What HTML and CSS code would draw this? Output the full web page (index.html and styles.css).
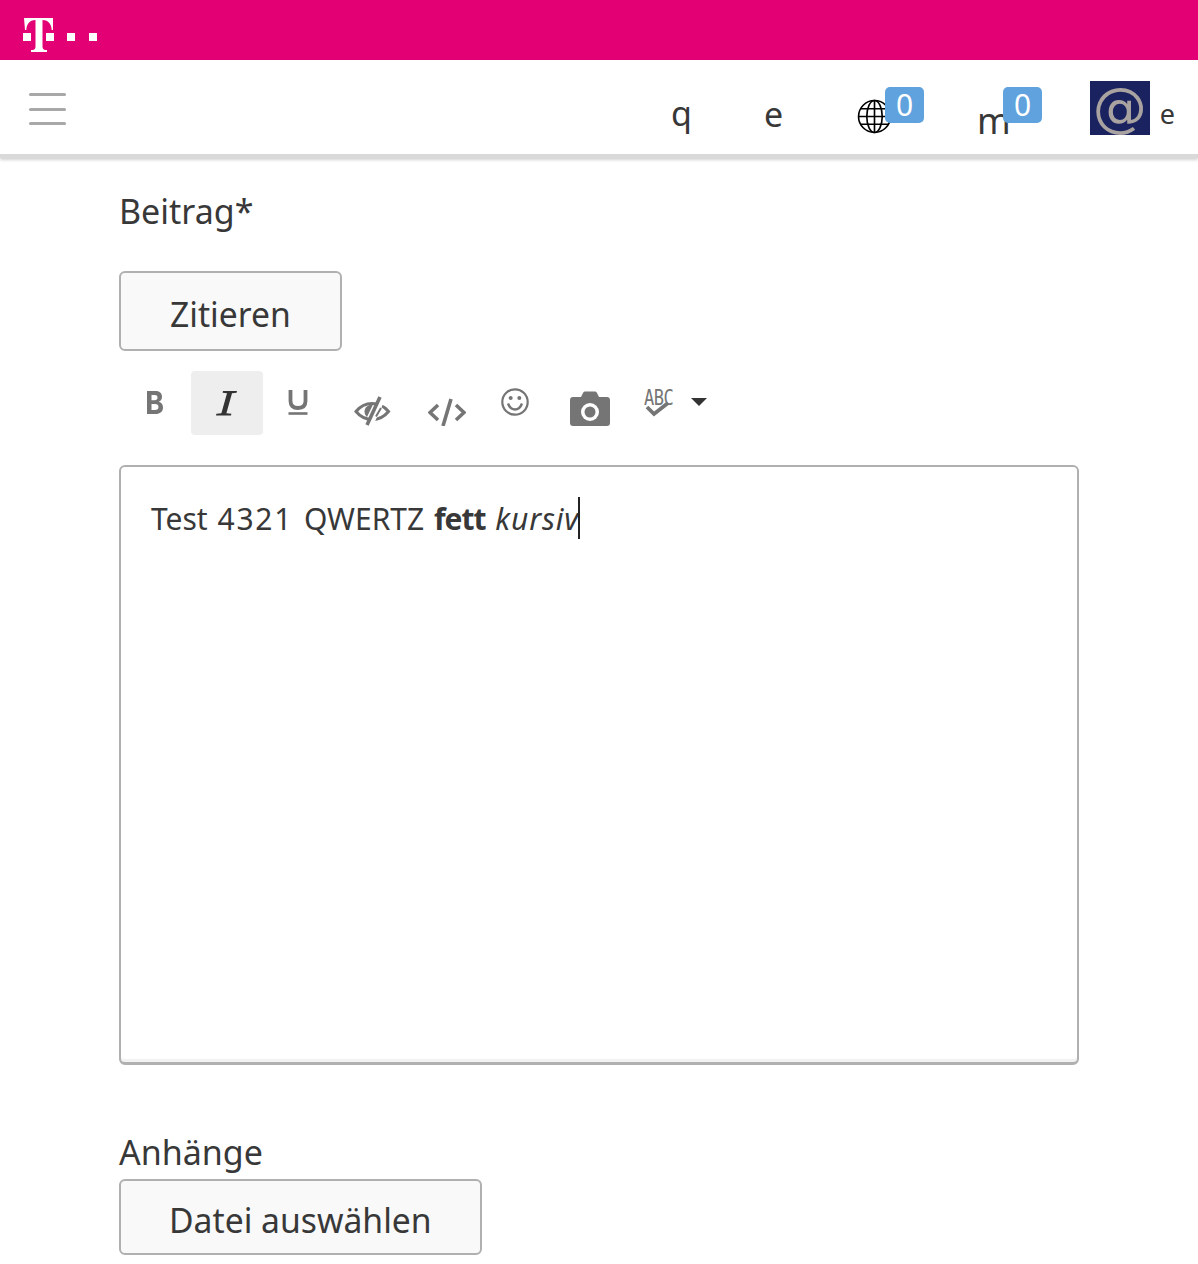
FILE: index.html
```html
<!DOCTYPE html>
<html lang="de">

<head>
    <meta charset="UTF-8" />
    <meta name="viewport" content="width=device-width, initial-scale=1.0" />
    <title>Beitrag</title>
    <link rel="stylesheet" href="styles.css">
</head>

<body>

    <header class="brand-bar">
        <svg class="brand-logo" width="76" height="37" viewBox="0 0 76 37" fill="#fff">
            <path d="M1 1h29v12h-1.300c-.2-5.500-3-9.800-9.200-10v26.500c0 2.500 1 3.300 3 3.500h1.500v2h-16v-2h1.500c2-.2 3-1 3-3.500v-26.500c-6.200.2-9 4.500-9.200 10h-1.300z" />
            <rect x="0" y="16" width="8" height="8" />
            <rect x="23" y="16" width="8" height="8" />
            <rect x="44" y="16" width="8" height="8" />
            <rect x="66" y="16" width="8" height="8" />
        </svg>
    </header>

    <nav class="nav-bar">
        <div class="burger"><span></span><span></span><span></span></div>
        <div class="nav-items">
            <span class="nav-item nav-q">q</span>
            <span class="nav-item nav-e">e</span>
            <span class="nav-item nav-globe">
                <svg width="35" height="35" viewBox="0 0 34 34" fill="none" stroke="#000" stroke-width="1.600">
                    <circle cx="17" cy="17" r="15.500" />
                    <ellipse cx="17" cy="17" rx="7.500" ry="15.500" />
                    <path d="M17 1.500v31M1.500 17h31M3.500 9.500h27M3.500 24.500h27" />
                </svg>
                <span class="badge">0</span>
            </span>
            <span class="nav-item nav-m">m<span class="badge">0</span></span>
            <span class="avatar">@</span>
            <span class="nav-item nav-last">e</span>
        </div>
    </nav>

    <main class="content">
        <label class="field-label post-label">Beitrag*</label>
        <button class="btn quote-btn">Zitieren</button>

        <div class="toolbar">
            <span class="tool tool-b">
                <svg width="18" height="26" viewBox="0 0 18 26" fill="#757575"><path fill-rule="evenodd" d="M1 1h8c4.500 0 7 2 7 5.800 0 2.500-1.200 4.200-3.300 5 2.800.7 4.300 2.700 4.300 5.700 0 4.300-3 6.500-7.500 6.500h-8.500zM5.500 5v5.300h3c2 0 3-.9 3-2.700s-1-2.600-3-2.600zM5.500 14v6h3.500c2.300 0 3.500-1 3.500-3s-1.200-3-3.500-3z"/></svg>
            </span>
            <span class="tool tool-i">
                <svg width="24" height="26" viewBox="0 0 24 26" fill="#333"><path d="M9 1h14l-.4 1.800-4.600.5-5.600 20 5 .5-.4 1.700h-15l.4-1.700 5-.5 5.600-20-4.400-.5z"/></svg>
            </span>
            <span class="tool tool-u">
                <svg width="20" height="26" viewBox="0 0 20 26" fill="none" stroke="#757575" stroke-width="3.800"><path d="M2.500 1v11c0 4.800 2.500 7 7.500 7s7.500-2.200 7.500-7v-11"/><path d="M.500 24.500h19" stroke-width="2.600"/></svg>
            </span>
            <span class="tool tool-eye">
                <svg width="37" height="30" viewBox="0 0 37 30" fill="none" stroke="#757575" stroke-width="3"><path d="M2 15.500c4.500-5.500 9.500-8 16-8 7 0 12 2.500 16.500 8-4.500 5.500-9.500 8-16 8-7 0-12-2.500-16.500-8z"/><path d="M19 8.500c-5 .2-8.500 3-8.500 7 0 2.200 1 4 2.500 5.500z" fill="#757575" stroke="none"/><path d="M27 1l-13 28" stroke-width="6" stroke="#fff" transform="translate(2 0)"/><path d="M26 1l-13 28" stroke-width="3.600"/><path d="M27 12l-5 8.500" stroke-width="2"/></svg>
            </span>
            <span class="tool tool-code">
                <svg width="38" height="28" viewBox="0 0 38 28" fill="none" stroke="#757575" stroke-width="3.600"><path d="M10 7l-8 7.500 8 7.500M28 7l8 7.500-8 7.500"/><path d="M23 1l-8 27"/></svg>
            </span>
            <span class="tool tool-smile">
                <svg width="28" height="28" viewBox="0 0 28 28" fill="none" stroke="#757575" stroke-width="2.200"><circle cx="14" cy="14" r="12.700"/><path d="M7 15.500c1.500 4 4 6 7 6s5.500-2 7-6" stroke-width="2.400"/><circle cx="9.700" cy="10" r="2" fill="#757575" stroke="none"/><circle cx="18.300" cy="10" r="2" fill="#757575" stroke="none"/></svg>
            </span>
            <span class="tool tool-camera">
                <svg width="40" height="36" viewBox="0 0 40 36"><path fill="#757575" d="M3 6h8l2-4c.5-1 1-1.500 2.500-1.500h9c1.500 0 2 .5 2.500 1.500l2 4h8c1.800 0 3 1.200 3 3v23c0 1.800-1.200 3-3 3h-34c-1.800 0-3-1.200-3-3v-23c0-1.800 1.200-3 3-3z"/><circle cx="20" cy="21" r="9" fill="#fff"/><circle cx="20" cy="21" r="5.500" fill="#757575"/></svg>
            </span>
            <span class="tool tool-spell">
                <span class="spell-abc">ABC</span>
                <svg class="spell-check" width="26" height="15" viewBox="0 0 26 15" fill="none" stroke="#757575" stroke-width="3.800"><path d="M2 5l7 7 14-11"/></svg>
            </span>
            <span class="caret-down"></span>
        </div>

        <div class="editor">
            <p class="editor-text">Test <span class="digits">4321</span> QWERTZ <b>fett</b> <i>kursiv</i><span class="cursor"></span></p>
        </div>

        <label class="field-label files-label">Anhänge</label>
        <button class="btn file-btn">Datei auswählen</button>
    </main>

</body>

</html>
```

FILE: styles.css
```css
* {
    box-sizing: border-box;
}

body {
    margin: 0;
    font-family: "Noto Sans", "Open Sans", sans-serif;
    color: #383838;
    background: #fff;
}

.brand-bar {
    height: 60px;
    background-color: #e20074;
    padding: 17px 0 0 23px;
}

.brand-logo {
    display: block;
}

.nav-bar {
    display: flex;
    justify-content: space-between;
    height: 98px;
    padding-right: 23px;
    box-shadow: 0 2px 3px rgba(0, 0, 0, 0.18);
    border-bottom: 4px solid #d9d9d9;
}

.burger {
    display: flex;
    flex-direction: column;
    gap: 11.5px;
    width: 37px;
    margin: 33px 0 0 29px;
}

.burger span {
    height: 3px;
    border-radius: 2px;
    background-color: #a8a8a8;
}

.nav-items {
    display: flex;
    align-items: flex-start;
}

.nav-item {
    position: relative;
    display: block;
    font-size: 34px;
    line-height: 40px;
    margin-top: 33px;
}

.nav-q {
    margin-right: 72px;
}

.nav-e {
    margin-top: 34px;
    margin-right: 74px;
}

.nav-globe {
    width: 35px;
    height: 35px;
    margin-top: 39px;
    margin-right: 85px;
}

.nav-globe svg {
    display: block;
}

.nav-m {
    font-size: 36px;
    margin-top: 41px;
    margin-right: 79px;
}

.badge {
    position: absolute;
    top: -12px;
    left: 28px;
    width: 39px;
    height: 36px;
    border-radius: 5px;
    background-color: #5fa2dd;
    color: #fff;
    font-size: 30px;
    line-height: 36px;
    text-align: center;
}

.nav-m .badge {
    top: -14px;
    left: 26px;
}

.avatar {
    display: flex;
    align-items: center;
    justify-content: center;
    width: 60px;
    height: 54px;
    margin-top: 21px;
    margin-right: 10px;
    background-color: #1a2260;
    color: #a8a2a0;
    font-family: "DejaVu Sans", sans-serif;
    font-size: 54px;
    line-height: 54px;
}

.nav-last {
    font-size: 27px;
    margin-top: 34px;
}

.content {
    padding: 0 119px;
}

.field-label {
    display: block;
    font-size: 34px;
    line-height: 40px;
}

.post-label {
    padding-top: 33px;
}

.btn {
    display: block;
    border: 2px solid #b0b0b0;
    border-radius: 6px;
    background-color: #f9f9f9;
    color: #383838;
    font-family: inherit;
    font-size: 33.7px;
    padding: 5px 49px 0;
}

.quote-btn {
    height: 80px;
    margin-top: 40px;
}

.toolbar {
    display: flex;
    align-items: flex-start;
    position: relative;
    height: 64px;
    margin-top: 20px;
}

.tool {
    display: block;
    flex: none;
    position: relative;
}

.tool svg {
    display: block;
}

.tool-b {
    margin: 19px 0 0 27px;
}

.tool-i {
    width: 72px;
    height: 64px;
    margin-left: 27px;
    padding: 19px 0 0 23px;
    background-color: #eee;
    border-radius: 4px;
}

.tool-u {
    margin: 18px 0 0 25px;
}

.tool-eye {
    margin: 25px 0 0 46px;
}

.tool-code {
    margin: 27px 0 0 37px;
}

.tool-smile {
    margin: 17px 0 0 35px;
}

.tool-camera {
    margin: 20px 0 0 41px;
}

.tool-spell {
    width: 30px;
    height: 34px;
    margin: 16px 0 0 34px;
}

.spell-abc {
    display: block;
    font-family: "DejaVu Sans Mono", monospace;
    font-size: 17px;
    line-height: 18px;
    letter-spacing: -0.5px;
    color: #757575;
    transform: scaleY(1.2);
    transform-origin: top;
}

.spell-check {
    position: absolute;
    top: 15px;
    left: 1px;
}

.caret-down {
    width: 0;
    height: 0;
    margin: 27px 0 0 17px;
    border-left: 8px solid transparent;
    border-right: 8px solid transparent;
    border-top: 8px solid #333;
}

.editor {
    width: 960px;
    height: 600px;
    margin-top: 30px;
    padding: 30px 30px 0;
    border: 2px solid #b0b0b0;
    border-bottom-width: 3px;
    border-radius: 6px;
    box-shadow: inset 0 -3px 0 #f2f2f2;
}

.editor-text {
    margin: 0;
    font-size: 30px;
    line-height: 44px;
    word-spacing: 2px;
}

.digits {
    letter-spacing: 1.75px;
    margin-right: 1px;
}

.editor-text b {
    letter-spacing: -1px;
}

.editor-text i {
    letter-spacing: 0.8px;
}

.cursor {
    display: inline-block;
    width: 2px;
    height: 42px;
    margin-left: -1px;
    vertical-align: -9px;
    background-color: #222;
}

.files-label {
    margin-top: 67px;
}

.file-btn {
    height: 76px;
    margin-top: 7px;
    padding: 5px 48px 0;
}
```
